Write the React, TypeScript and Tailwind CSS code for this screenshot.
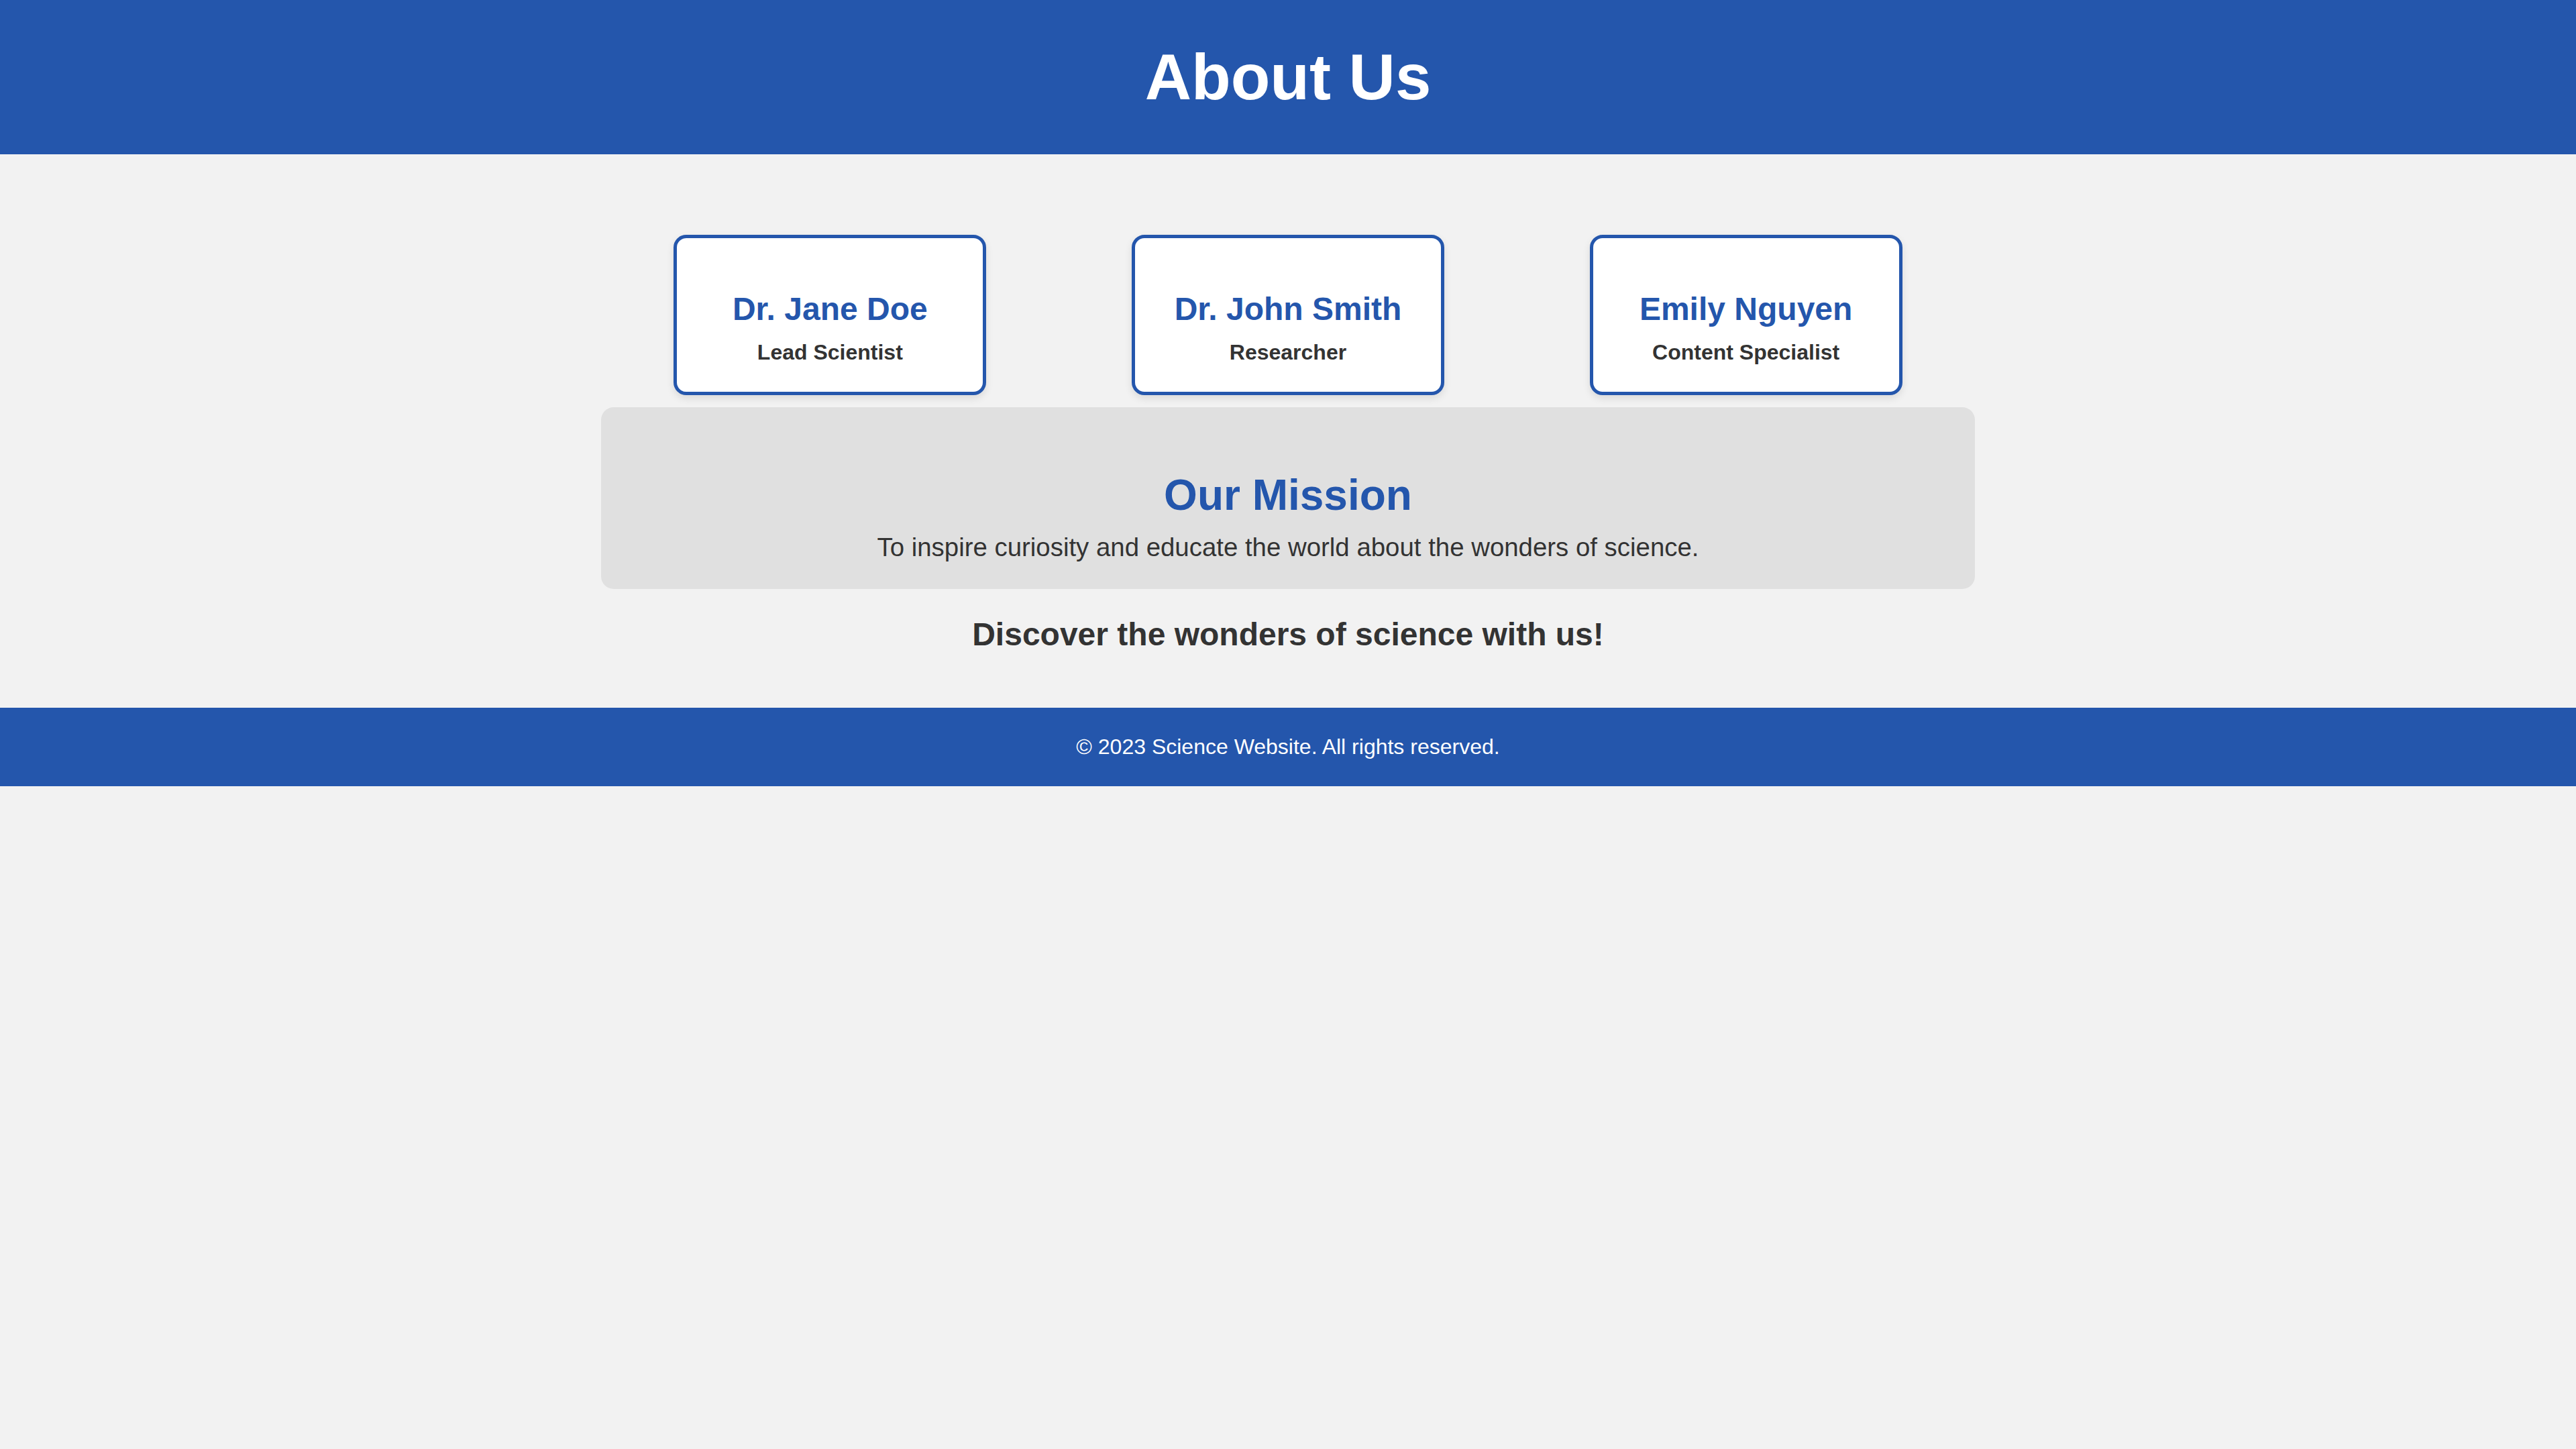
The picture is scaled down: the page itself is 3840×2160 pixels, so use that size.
const team = [
  { name: "Dr. Jane Doe", role: "Lead Scientist" },
  { name: "Dr. John Smith", role: "Researcher" },
  { name: "Emily Nguyen", role: "Content Specialist" },
];

export default function App() {
  return (
    <div className="min-h-screen bg-[#f2f2f2] font-['Liberation_Sans',Arial,sans-serif] text-[#333333]">
      <header className="bg-[#2456ac] py-[60px] text-center">
        <h1 className="text-[96px] leading-[110px] font-bold text-white">About Us</h1>
      </header>

      <main className="mx-auto w-[2048px] pt-[120px] pb-[82px]">
        {/* Team cards */}
        <div className="flex justify-around">
          {team.map((member, i) => (
            <div
              key={i}
              className="w-[466px] rounded-[19px] border-[5px] border-[#2456ac] bg-white pt-[78px] pb-[40px] text-center shadow-[0_5px_12px_rgba(0,0,0,0.1)]"
            >
              <h3 className="text-[48px] leading-[55px] font-bold text-[#2456ac]">{member.name}</h3>
              <p className="mt-[19px] text-[32px] leading-[37px] font-bold">{member.role}</p>
            </div>
          ))}
        </div>

        {/* Mission */}
        <section className="mt-[18px] rounded-[19px] bg-[#e0e0e0] pt-[94px] pb-[40px] text-center">
          <h2 className="text-[64px] leading-[74px] font-bold text-[#2456ac]">Our Mission</h2>
          <p className="mt-[19px] text-[38.4px] leading-[44px]">
            To inspire curiosity and educate the world about the wonders of science.
          </p>
        </section>

        <h3 className="mt-[40px] text-center text-[48px] leading-[55px] font-bold">
          Discover the wonders of science with us!
        </h3>
      </main>

      <footer className="bg-[#2456ac] py-[40px] text-center">
        <p className="text-[32px] leading-[37px] text-white">© 2023 Science Website. All rights reserved.</p>
      </footer>
    </div>
  );
}
